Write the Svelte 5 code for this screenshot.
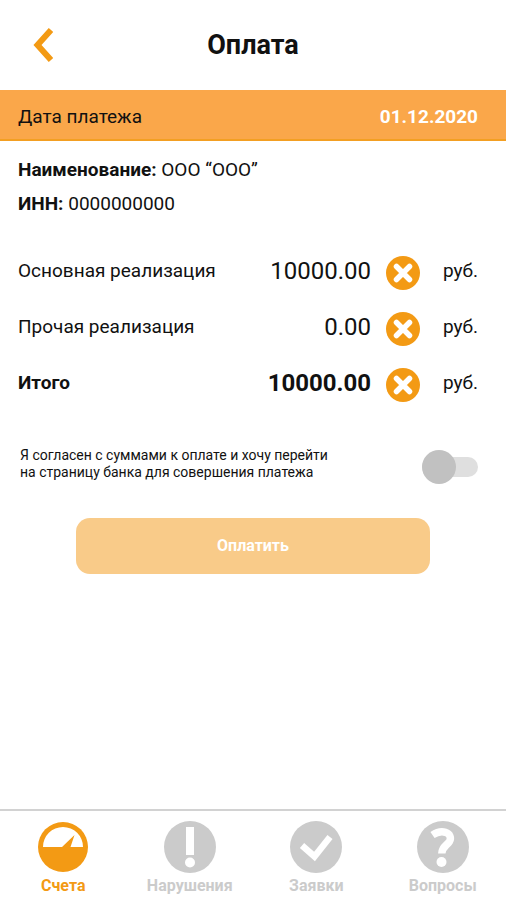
<script>
  let rows = $state([
    { id: 'main', label: 'Основная реализация', value: '10000.00' },
    { id: 'other', label: 'Прочая реализация', value: '0.00' },
    { id: 'total', label: 'Итого', value: '10000.00', total: true }
  ]);
  let agreed = $state(false);

  const tabs = [
    { id: 'bills', label: 'Счета', active: true },
    { id: 'violations', label: 'Нарушения' },
    { id: 'requests', label: 'Заявки' },
    { id: 'questions', label: 'Вопросы' }
  ];
</script>

<div class="app">
  <header>
    <button class="back" type="button" aria-label="Назад">
      <svg width="20" height="34" viewBox="0 0 20 34">
        <path d="M18 2 4.500 17 18 32" fill="none" stroke="#f39a14" stroke-width="6" />
      </svg>
    </button>
    <h1>Оплата</h1>
  </header>

  <div class="date">
    <span>Дата платежа</span>
    <time datetime="2020-12-01">01.12.2020</time>
  </div>

  <main>
    <div class="payer">
      <p><b>Наименование:</b> ООО “ООО”</p>
      <p><b>ИНН:</b> 0000000000</p>
    </div>

    <div class="rows">
      {#each rows as row (row.id)}
        <div class="row" class:total={row.total}>
          <label for={row.id}>{row.label}</label>
          <input id={row.id} type="text" inputmode="decimal" bind:value={row.value} />
          <button class="clear" type="button" aria-label="Очистить" onclick={() => (row.value = '0.00')}>
            <svg width="34" height="34" viewBox="0 0 34 34">
              <circle cx="17" cy="17" r="17" fill="#f39a14" />
              <path d="M10.500 10.500 23.500 23.500M23.500 10.500 10.500 23.500" stroke="#fff" stroke-width="5.500" stroke-linecap="round" />
            </svg>
          </button>
          <span class="unit">руб.</span>
        </div>
      {/each}
    </div>

    <div class="consent">
      <label for="agree">Я согласен с суммами к оплате и хочу перейти<br />на страницу банка для совершения платежа</label>
      <input id="agree" class="switch" type="checkbox" role="switch" bind:checked={agreed} />
    </div>

    <button class="pay" class:ready={agreed} type="button" disabled={!agreed}>Оплатить</button>
  </main>

  <nav>
    {#each tabs as tab (tab.id)}
      <a href="#{tab.id}" class:active={tab.active}>
        <svg width="52" height="52" viewBox="0 0 52 52">
          {#if tab.id === 'bills'}
            <circle cx="26" cy="26" r="25" fill="currentColor" />
            <path d="M6 26a20 20 0 0 1 40 0H33.500L37.500 14 25 26Z" fill="#fff" />
          {:else}
            <circle cx="26" cy="26" r="26" fill="currentColor" />
          {/if}
          {#if tab.id === 'violations'}
            <path d="M22 6h8v28h-8z" fill="#fff" />
            <circle cx="26" cy="41.500" r="5" fill="#fff" />
          {:else if tab.id === 'requests'}
            <path d="M12 24.500 24.500 35.500 40 16" fill="none" stroke="#fff" stroke-width="6.500" />
          {:else if tab.id === 'questions'}
            <path d="M15.500 14C20 11 25 10.300 28.500 11.300 33 12.500 34.500 17 32.500 20.500 30 24.500 25 25.500 24.800 32.500" fill="none" stroke="#fff" stroke-width="7.500" />
            <circle cx="24.500" cy="41" r="5" fill="#fff" />
          {/if}
        </svg>
        <span>{tab.label}</span>
      </a>
    {/each}
  </nav>
</div>

<style>
  :global(body) {
    margin: 0;
    background: #fff;
  }
  .app {
    min-height: 100vh;
    display: flex;
    flex-direction: column;
    background: #fff;
    color: #111;
    font: 19px/32px Roboto, "Noto Sans", sans-serif;
  }
  button,
  input {
    margin: 0;
    padding: 0;
    border: 0;
    background: none;
    color: inherit;
    font: inherit;
  }
  svg {
    display: block;
  }
  p,
  h1 {
    margin: 0;
  }
  header {
    display: grid;
    grid-template-columns: 60px 1fr 60px;
    align-items: center;
    height: 90px;
  }
  .back {
    justify-self: end;
    padding-right: 7px;
  }
  h1 {
    text-align: center;
    font-size: 27px;
    font-weight: 700;
  }
  .date {
    display: flex;
    justify-content: space-between;
    align-items: center;
    box-sizing: border-box;
    height: 51px;
    padding: 4px 28px 0 18px;
    background: #faa74a;
    border-bottom: 2px solid #f39f22;
  }
  time {
    color: #fff;
    font-weight: 700;
  }
  main {
    flex: 1;
    padding: 12px 28px 24px 18px;
  }
  .payer p {
    line-height: 34px;
  }
  b {
    font-weight: 700;
  }
  .rows {
    padding-top: 22px;
  }
  .row {
    display: flex;
    align-items: center;
    height: 56px;
  }
  .row label {
    flex: none;
  }
  .row input {
    flex: 1;
    min-width: 0;
    text-align: right;
    font-size: 24px;
  }
  .clear {
    margin: 4px 0 0 15px;
  }
  .unit {
    width: 58px;
    text-align: right;
  }
  .total label,
  .total input {
    font-weight: 700;
  }
  .consent {
    display: flex;
    justify-content: space-between;
    align-items: flex-end;
    padding: 36px 0 0 2px;
    font-size: 14px;
    line-height: 17px;
  }
  .consent label {
    padding-bottom: 3px;
  }
  .switch {
    appearance: none;
    position: relative;
    display: flex;
    align-items: center;
    width: 56px;
    height: 34px;
  }
  .switch::before {
    content: "";
    flex: 1;
    height: 20px;
    border-radius: 10px;
    background: #dfdfdf;
  }
  .switch::after {
    content: "";
    position: absolute;
    left: 0;
    width: 34px;
    height: 34px;
    border-radius: 50%;
    background: #c1c1c1;
  }
  .switch:checked::after {
    left: 22px;
    background: #f39a14;
  }
  .pay {
    display: block;
    height: 56px;
    margin: 34px 48px 0 58px;
    width: calc(100% - 106px);
    border-radius: 14px;
    background: #f9cb89;
    color: #fff;
    font-size: 16px;
    font-weight: 700;
  }
  .ready {
    background: #f39a14;
  }
  nav {
    display: flex;
    justify-content: space-between;
    padding: 10px 0 2px;
    border-top: 2px solid #d2d2d2;
  }
  nav a {
    flex: 1;
    display: flex;
    flex-direction: column;
    align-items: center;
    color: #cbcbcb;
    font-size: 16px;
    font-weight: 700;
    line-height: 25px;
    text-decoration: none;
  }
  .active {
    color: #f39a14;
  }
</style>
